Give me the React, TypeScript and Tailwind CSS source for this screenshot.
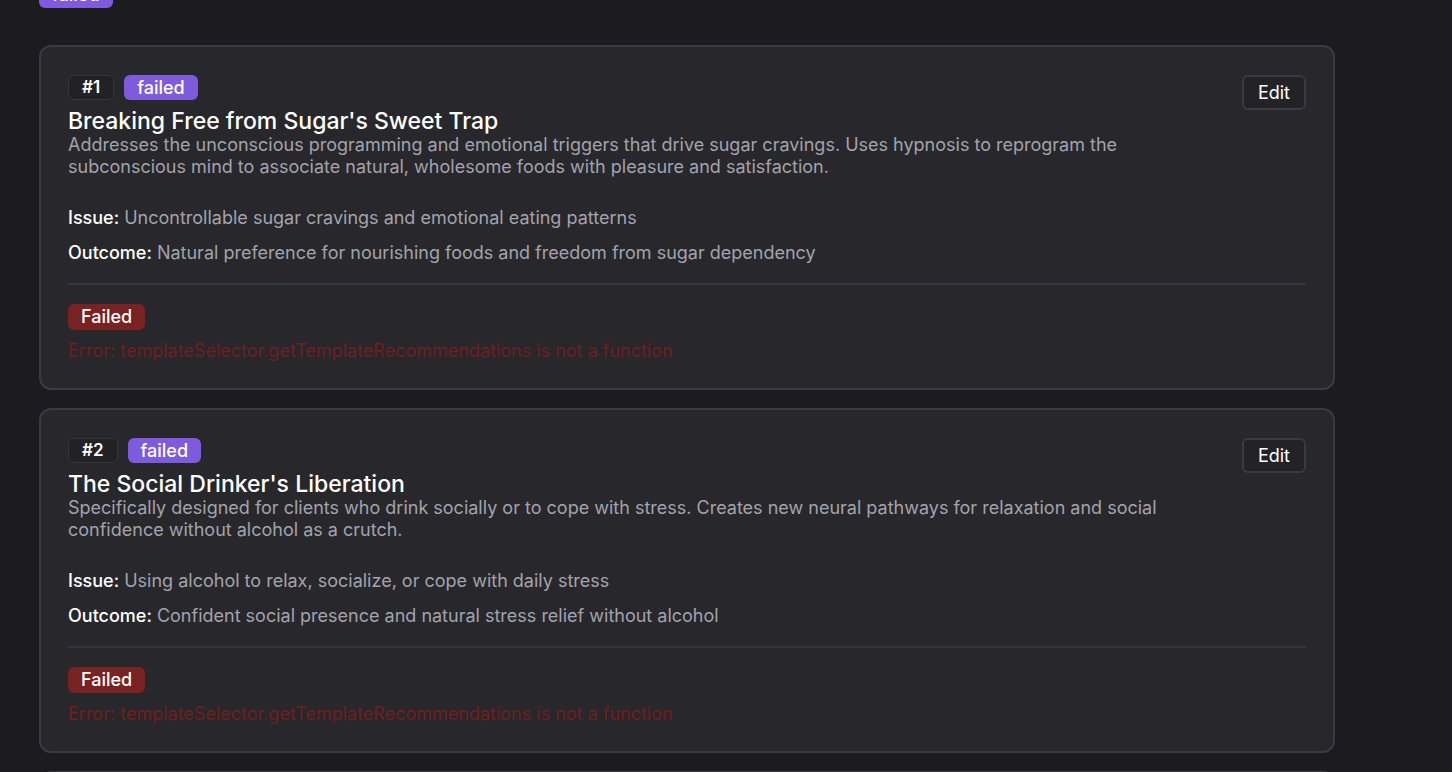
const sessions = [
  {
    num: 1,
    title: "Breaking Free from Sugar's Sweet Trap",
    description:
      "Addresses the unconscious programming and emotional triggers that drive sugar cravings. Uses hypnosis to reprogram the subconscious mind to associate natural, wholesome foods with pleasure and satisfaction.",
    issue: "Uncontrollable sugar cravings and emotional eating patterns",
    outcome: "Natural preference for nourishing foods and freedom from sugar dependency",
  },
  {
    num: 2,
    title: "The Social Drinker's Liberation",
    description:
      "Specifically designed for clients who drink socially or to cope with stress. Creates new neural pathways for relaxation and social confidence without alcohol as a crutch.",
    issue: "Using alcohol to relax, socialize, or cope with daily stress",
    outcome: "Confident social presence and natural stress relief without alcohol",
  },
  {
    num: 3,
    title: "Releasing the Nicotine Grip",
    description: "",
    issue: "",
    outcome: "",
  },
];

const App = () => {
  return (
    <div className="h-screen bg-[#1c1b20] overflow-hidden font-['Inter',sans-serif]">
      <div className="w-[1296px] ml-[39px] -mt-[18px]">
        <span className="inline-block px-[13px] h-[26px] leading-[26px] rounded-md bg-[#7d5bdc] text-white text-[18px] font-medium">
          failed
        </span>

        <div className="mt-[37px] space-y-[18px]">
          {sessions.map((s) => (
            <div
              key={s.num}
              className="bg-[#27272c] border-2 border-[#3a3a40] rounded-xl pl-[27px] pr-[27px] pt-[28px] pb-[26px]"
            >
              <div className="flex justify-between items-start">
                <div className="max-w-[1120px]">
                  <div className="flex items-center gap-[10px]">
                    <span className="h-[25px] px-[13px] leading-[23px] rounded-md border border-[#35353b] bg-[#222226] text-white text-[17px] font-semibold">
                      #{s.num}
                    </span>
                    <span className="h-[25px] px-[13px] leading-[25px] rounded-md bg-[#7d5bdc] text-white text-[18px] font-medium">
                      failed
                    </span>
                  </div>
                  <h3 className="mt-[8px] text-[23px] leading-[26px] font-medium text-white">{s.title}</h3>
                  <p className="text-[18px] leading-[22px] text-[#a3a3ab]">{s.description}</p>
                </div>
                <button className="h-[35px] px-[14px] rounded-md border-2 border-[#3a3a40] text-white text-[18px] bg-[#232327]">
                  Edit
                </button>
              </div>

              <div className="mt-[29px] space-y-[13px] text-[18px] leading-[22px]">
                <p className="text-[#a3a3ab]">
                  <span className="font-medium text-white">Issue:</span> {s.issue}
                </p>
                <p className="text-[#a3a3ab]">
                  <span className="font-medium text-white">Outcome:</span> {s.outcome}
                </p>
              </div>

              <div className="mt-[19px] border-t-2 border-[#35353b] pt-[19px]">
                <span className="inline-block h-[26px] px-[13px] leading-[26px] rounded-md bg-[#782222] text-white text-[18px] font-medium">
                  Failed
                </span>
                <p className="mt-[10px] text-[18px] leading-[22px] text-[#6e1f1f]">
                  Error: templateSelector.getTemplateRecommendations is not a function
                </p>
              </div>
            </div>
          ))}
        </div>
      </div>
    </div>
  );
};

export default App;
